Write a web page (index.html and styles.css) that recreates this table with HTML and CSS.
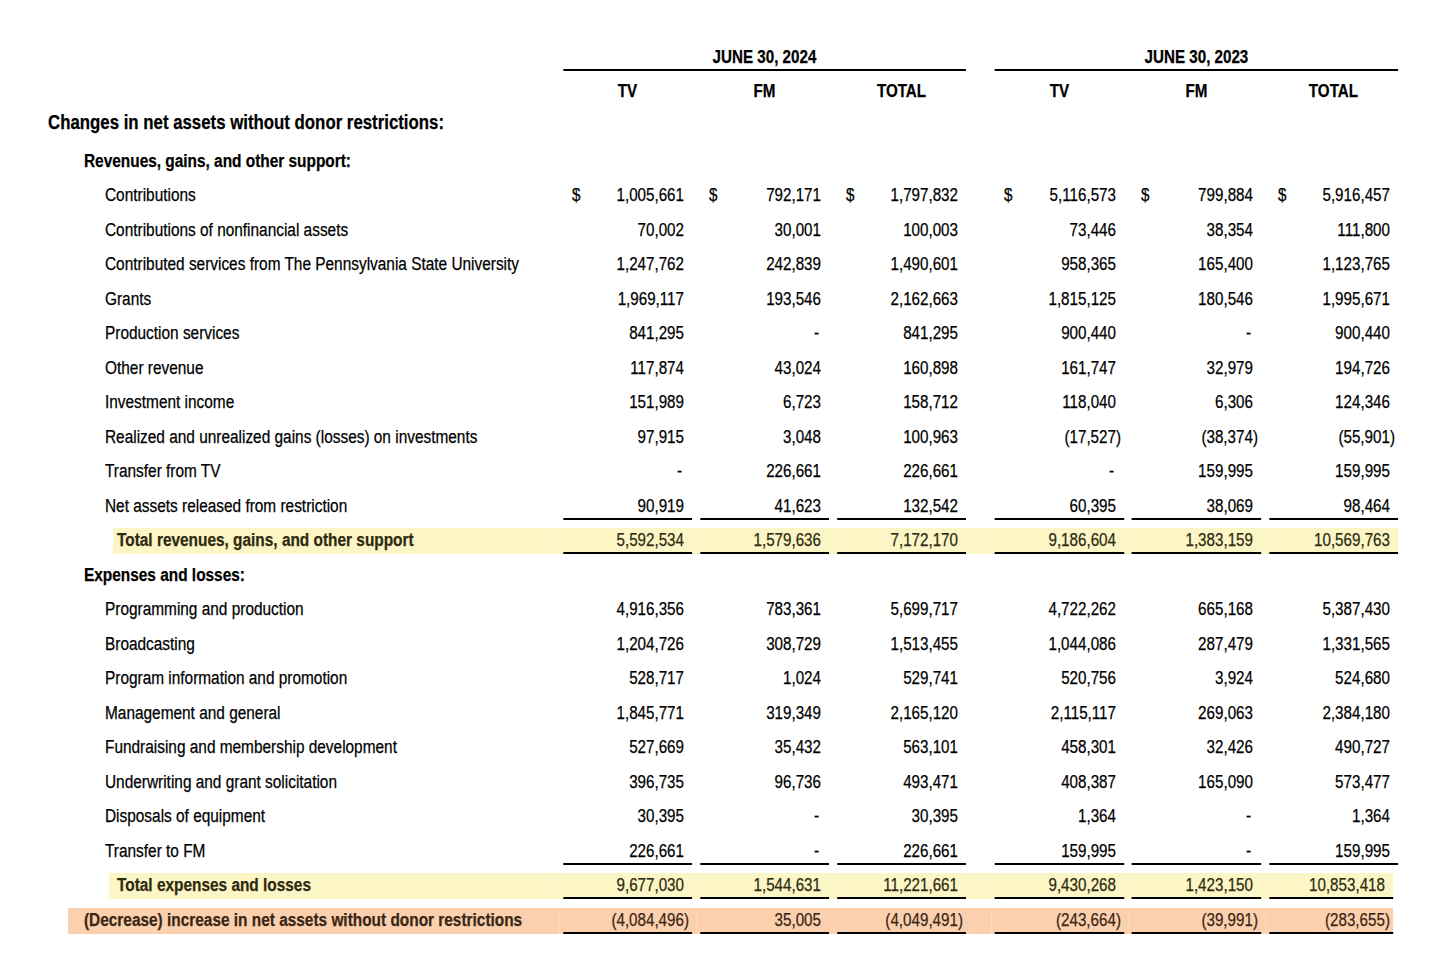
FILE: index.html
```html
<!DOCTYPE html>
<html lang="en">
<head>
<meta charset="utf-8">
<title>Statement of Activities</title>
<link rel="stylesheet" href="styles.css">
</head>
<body>
<div class="sheet">
 <div class="narrow">
  <div class="row r-date">
    <div></div>
    <div class="grp"><div class="gh">JUNE 30, 2024</div></div>
    <div></div>
    <div class="grp last"><div class="gh">JUNE 30, 2023</div></div>
  </div>
  <div class="row r-col">
    <div></div>
    <div class="ch">TV</div><div class="ch">FM</div><div class="ch">TOTAL</div>
    <div></div>
    <div class="ch">TV</div><div class="ch">FM</div><div class="ch last">TOTAL</div>
  </div>
  <div class="row r-h1"><div class="lab l1">Changes in net assets without donor restrictions:</div></div>
  <div class="row r-h2"><div class="lab l2">Revenues, gains, and other support:</div></div>

  <div class="row d">
    <div class="lab l3">Contributions</div>
    <div class="cell"><div class="v"><span>$</span><span class="n">1,005,661</span></div></div>
    <div class="cell"><div class="v"><span>$</span><span class="n">792,171</span></div></div>
    <div class="cell"><div class="v"><span>$</span><span class="n">1,797,832</span></div></div>
    <div></div>
    <div class="cell"><div class="v"><span>$</span><span class="n">5,116,573</span></div></div>
    <div class="cell"><div class="v"><span>$</span><span class="n">799,884</span></div></div>
    <div class="cell"><div class="v"><span>$</span><span class="n">5,916,457</span></div></div>
  </div>
  <div class="row d">
    <div class="lab l3">Contributions of nonfinancial assets</div>
    <div class="cell"><div class="v"><span class="n">70,002</span></div></div>
    <div class="cell"><div class="v"><span class="n">30,001</span></div></div>
    <div class="cell"><div class="v"><span class="n">100,003</span></div></div>
    <div></div>
    <div class="cell"><div class="v"><span class="n">73,446</span></div></div>
    <div class="cell"><div class="v"><span class="n">38,354</span></div></div>
    <div class="cell"><div class="v"><span class="n">111,800</span></div></div>
  </div>
  <div class="row d">
    <div class="lab l3">Contributed services from The Pennsylvania State University</div>
    <div class="cell"><div class="v"><span class="n">1,247,762</span></div></div>
    <div class="cell"><div class="v"><span class="n">242,839</span></div></div>
    <div class="cell"><div class="v"><span class="n">1,490,601</span></div></div>
    <div></div>
    <div class="cell"><div class="v"><span class="n">958,365</span></div></div>
    <div class="cell"><div class="v"><span class="n">165,400</span></div></div>
    <div class="cell"><div class="v"><span class="n">1,123,765</span></div></div>
  </div>
  <div class="row d">
    <div class="lab l3">Grants</div>
    <div class="cell"><div class="v"><span class="n">1,969,117</span></div></div>
    <div class="cell"><div class="v"><span class="n">193,546</span></div></div>
    <div class="cell"><div class="v"><span class="n">2,162,663</span></div></div>
    <div></div>
    <div class="cell"><div class="v"><span class="n">1,815,125</span></div></div>
    <div class="cell"><div class="v"><span class="n">180,546</span></div></div>
    <div class="cell"><div class="v"><span class="n">1,995,671</span></div></div>
  </div>
  <div class="row d">
    <div class="lab l3">Production services</div>
    <div class="cell"><div class="v"><span class="n">841,295</span></div></div>
    <div class="cell"><div class="v"><span class="n dash">-</span></div></div>
    <div class="cell"><div class="v"><span class="n">841,295</span></div></div>
    <div></div>
    <div class="cell"><div class="v"><span class="n">900,440</span></div></div>
    <div class="cell"><div class="v"><span class="n dash">-</span></div></div>
    <div class="cell"><div class="v"><span class="n">900,440</span></div></div>
  </div>
  <div class="row d">
    <div class="lab l3">Other revenue</div>
    <div class="cell"><div class="v"><span class="n">117,874</span></div></div>
    <div class="cell"><div class="v"><span class="n">43,024</span></div></div>
    <div class="cell"><div class="v"><span class="n">160,898</span></div></div>
    <div></div>
    <div class="cell"><div class="v"><span class="n">161,747</span></div></div>
    <div class="cell"><div class="v"><span class="n">32,979</span></div></div>
    <div class="cell"><div class="v"><span class="n">194,726</span></div></div>
  </div>
  <div class="row d">
    <div class="lab l3">Investment income</div>
    <div class="cell"><div class="v"><span class="n">151,989</span></div></div>
    <div class="cell"><div class="v"><span class="n">6,723</span></div></div>
    <div class="cell"><div class="v"><span class="n">158,712</span></div></div>
    <div></div>
    <div class="cell"><div class="v"><span class="n">118,040</span></div></div>
    <div class="cell"><div class="v"><span class="n">6,306</span></div></div>
    <div class="cell"><div class="v"><span class="n">124,346</span></div></div>
  </div>
  <div class="row d">
    <div class="lab l3">Realized and unrealized gains (losses) on investments</div>
    <div class="cell"><div class="v"><span class="n">97,915</span></div></div>
    <div class="cell"><div class="v"><span class="n">3,048</span></div></div>
    <div class="cell"><div class="v"><span class="n">100,963</span></div></div>
    <div></div>
    <div class="cell"><div class="v"><span class="n">(17,527<span class="p">)</span></span></div></div>
    <div class="cell"><div class="v"><span class="n">(38,374<span class="p">)</span></span></div></div>
    <div class="cell"><div class="v"><span class="n">(55,901<span class="p">)</span></span></div></div>
  </div>
  <div class="row d">
    <div class="lab l3">Transfer from TV</div>
    <div class="cell"><div class="v"><span class="n dash">-</span></div></div>
    <div class="cell"><div class="v"><span class="n">226,661</span></div></div>
    <div class="cell"><div class="v"><span class="n">226,661</span></div></div>
    <div></div>
    <div class="cell"><div class="v"><span class="n dash">-</span></div></div>
    <div class="cell"><div class="v"><span class="n">159,995</span></div></div>
    <div class="cell"><div class="v"><span class="n">159,995</span></div></div>
  </div>
  <div class="row d u">
    <div class="lab l3">Net assets released from restriction</div>
    <div class="cell"><div class="v"><span class="n">90,919</span></div></div>
    <div class="cell"><div class="v"><span class="n">41,623</span></div></div>
    <div class="cell"><div class="v"><span class="n">132,542</span></div></div>
    <div></div>
    <div class="cell"><div class="v"><span class="n">60,395</span></div></div>
    <div class="cell"><div class="v"><span class="n">38,069</span></div></div>
    <div class="cell"><div class="v"><span class="n">98,464</span></div></div>
  </div>
  <div class="row d u hl-y">
    <div class="lab lt1">Total revenues, gains, and other support</div>
    <div class="cell"><div class="v"><span class="n">5,592,534</span></div></div>
    <div class="cell"><div class="v"><span class="n">1,579,636</span></div></div>
    <div class="cell"><div class="v"><span class="n">7,172,170</span></div></div>
    <div class="gap"></div>
    <div class="cell"><div class="v"><span class="n">9,186,604</span></div></div>
    <div class="cell"><div class="v"><span class="n">1,383,159</span></div></div>
    <div class="cell"><div class="v"><span class="n">10,569,763</span></div></div>
  </div>

  <div class="row d">
    <div class="lab l2">Expenses and losses:</div>
  </div>
  <div class="row d">
    <div class="lab l3">Programming and production</div>
    <div class="cell"><div class="v"><span class="n">4,916,356</span></div></div>
    <div class="cell"><div class="v"><span class="n">783,361</span></div></div>
    <div class="cell"><div class="v"><span class="n">5,699,717</span></div></div>
    <div></div>
    <div class="cell"><div class="v"><span class="n">4,722,262</span></div></div>
    <div class="cell"><div class="v"><span class="n">665,168</span></div></div>
    <div class="cell"><div class="v"><span class="n">5,387,430</span></div></div>
  </div>
  <div class="row d">
    <div class="lab l3">Broadcasting</div>
    <div class="cell"><div class="v"><span class="n">1,204,726</span></div></div>
    <div class="cell"><div class="v"><span class="n">308,729</span></div></div>
    <div class="cell"><div class="v"><span class="n">1,513,455</span></div></div>
    <div></div>
    <div class="cell"><div class="v"><span class="n">1,044,086</span></div></div>
    <div class="cell"><div class="v"><span class="n">287,479</span></div></div>
    <div class="cell"><div class="v"><span class="n">1,331,565</span></div></div>
  </div>
  <div class="row d">
    <div class="lab l3">Program information and promotion</div>
    <div class="cell"><div class="v"><span class="n">528,717</span></div></div>
    <div class="cell"><div class="v"><span class="n">1,024</span></div></div>
    <div class="cell"><div class="v"><span class="n">529,741</span></div></div>
    <div></div>
    <div class="cell"><div class="v"><span class="n">520,756</span></div></div>
    <div class="cell"><div class="v"><span class="n">3,924</span></div></div>
    <div class="cell"><div class="v"><span class="n">524,680</span></div></div>
  </div>
  <div class="row d">
    <div class="lab l3">Management and general</div>
    <div class="cell"><div class="v"><span class="n">1,845,771</span></div></div>
    <div class="cell"><div class="v"><span class="n">319,349</span></div></div>
    <div class="cell"><div class="v"><span class="n">2,165,120</span></div></div>
    <div></div>
    <div class="cell"><div class="v"><span class="n">2,115,117</span></div></div>
    <div class="cell"><div class="v"><span class="n">269,063</span></div></div>
    <div class="cell"><div class="v"><span class="n">2,384,180</span></div></div>
  </div>
  <div class="row d">
    <div class="lab l3">Fundraising and membership development</div>
    <div class="cell"><div class="v"><span class="n">527,669</span></div></div>
    <div class="cell"><div class="v"><span class="n">35,432</span></div></div>
    <div class="cell"><div class="v"><span class="n">563,101</span></div></div>
    <div></div>
    <div class="cell"><div class="v"><span class="n">458,301</span></div></div>
    <div class="cell"><div class="v"><span class="n">32,426</span></div></div>
    <div class="cell"><div class="v"><span class="n">490,727</span></div></div>
  </div>
  <div class="row d">
    <div class="lab l3">Underwriting and grant solicitation</div>
    <div class="cell"><div class="v"><span class="n">396,735</span></div></div>
    <div class="cell"><div class="v"><span class="n">96,736</span></div></div>
    <div class="cell"><div class="v"><span class="n">493,471</span></div></div>
    <div></div>
    <div class="cell"><div class="v"><span class="n">408,387</span></div></div>
    <div class="cell"><div class="v"><span class="n">165,090</span></div></div>
    <div class="cell"><div class="v"><span class="n">573,477</span></div></div>
  </div>
  <div class="row d">
    <div class="lab l3">Disposals of equipment</div>
    <div class="cell"><div class="v"><span class="n">30,395</span></div></div>
    <div class="cell"><div class="v"><span class="n dash">-</span></div></div>
    <div class="cell"><div class="v"><span class="n">30,395</span></div></div>
    <div></div>
    <div class="cell"><div class="v"><span class="n">1,364</span></div></div>
    <div class="cell"><div class="v"><span class="n dash">-</span></div></div>
    <div class="cell"><div class="v"><span class="n">1,364</span></div></div>
  </div>
  <div class="row d u">
    <div class="lab l3">Transfer to FM</div>
    <div class="cell"><div class="v"><span class="n">226,661</span></div></div>
    <div class="cell"><div class="v"><span class="n dash">-</span></div></div>
    <div class="cell"><div class="v"><span class="n">226,661</span></div></div>
    <div></div>
    <div class="cell"><div class="v"><span class="n">159,995</span></div></div>
    <div class="cell"><div class="v"><span class="n dash">-</span></div></div>
    <div class="cell"><div class="v"><span class="n">159,995</span></div></div>
  </div>
  <div class="row d u hl-y short">
    <div class="lab lt2">Total expenses and losses</div>
    <div class="cell"><div class="v"><span class="n">9,677,030</span></div></div>
    <div class="cell"><div class="v"><span class="n">1,544,631</span></div></div>
    <div class="cell"><div class="v"><span class="n">11,221,661</span></div></div>
    <div class="gap"></div>
    <div class="cell"><div class="v"><span class="n">9,430,268</span></div></div>
    <div class="cell"><div class="v"><span class="n">1,423,150</span></div></div>
    <div class="cell"><div class="v"><span class="n">10,853,418</span></div></div>
  </div>
  <div class="row d u hl-o short">
    <div class="lab lt3">(Decrease) increase in net assets without donor restrictions</div>
    <div class="cell"><div class="v"><span class="n">(4,084,496<span class="p">)</span></span></div></div>
    <div class="cell"><div class="v"><span class="n">35,005</span></div></div>
    <div class="cell"><div class="v"><span class="n">(4,049,491<span class="p">)</span></span></div></div>
    <div class="gap"></div>
    <div class="cell"><div class="v"><span class="n">(243,664<span class="p">)</span></span></div></div>
    <div class="cell"><div class="v"><span class="n">(39,991<span class="p">)</span></span></div></div>
    <div class="cell"><div class="v"><span class="n">(283,655<span class="p">)</span></span></div></div>
  </div>
 </div>
</div>
</body>
</html>
```

FILE: styles.css
```css
html, body {
  margin: 0;
  padding: 0;
  background: #ffffff;
}

body {
  font-family: "Liberation Sans", Arial, sans-serif;
  font-size: 18.5px;
  color: #000000;
  --k: 0.82;
}

.sheet {
  padding: 45px 0 0 41px;
}

/* The statement is set in a narrow face: the whole block is laid out
   at full width and condensed horizontally (Arial Narrow = Arial x 0.82). */
.narrow {
  width: calc(1357px / var(--k));
  transform: scaleX(var(--k));
  transform-origin: 0 0;
  -webkit-text-stroke: 0.25px currentColor;
}

.row {
  display: grid;
  grid-template-columns:
    calc(518px / var(--k))
    calc(137px / var(--k))
    calc(137px / var(--k))
    calc(137px / var(--k))
    calc(21px / var(--k))
    calc(137px / var(--k))
    calc(137px / var(--k))
    calc(133px / var(--k));
}

/* header: date groups */
.grp {
  grid-column: span 3;
  padding: 0 calc(4px / var(--k));
}
.grp.last {
  padding: 0 0 0 calc(4px / var(--k));
}
.gh {
  height: 24px;
  line-height: 24px;
  text-align: center;
  font-weight: bold;
  border-bottom: 2px solid #000;
}

/* header: column names */
.r-col {
  padding-top: 8px;
}
.ch {
  height: 24px;
  line-height: 24px;
  text-align: center;
  font-weight: bold;
  padding: 0 calc(4px / var(--k));
}
.ch.last {
  padding: 0 0 0 calc(4px / var(--k));
}

.r-h1 {
  padding-top: 7px;
}
.r-h1 .lab {
  grid-column: 1 / -1;
}
.r-h2 {
  padding-top: 15px;
  padding-bottom: 5px;
}
.r-h2 .lab {
  grid-column: 1 / -1;
}

.lab {
  height: 24px;
  line-height: 24px;
  white-space: nowrap;
  font-size: 18.8px;
}
.l1 {
  padding-left: calc(7px / var(--k));
  font-weight: bold;
  font-size: 20.5px;
}
.l2 {
  padding-left: calc(43px / var(--k));
  font-weight: bold;
}
.l3 {
  padding-left: calc(64px / var(--k));
}

/* data rows */
.d {
  padding: 5px 0 3.5px;
}
.d .lab {
  height: 26px;
  line-height: 24px;
}
.cell {
  padding: 0 calc(4px / var(--k));
}
.cell:last-child {
  padding: 0 0 0 calc(4px / var(--k));
}
.v {
  display: flex;
  height: 24px;
  line-height: 24px;
  padding: 0 calc(8px / var(--k)) 0 calc(9px / var(--k));
  border-bottom: 2px solid transparent;
  white-space: nowrap;
}
.n {
  margin-left: auto;
}
.n.dash {
  margin-right: calc(2px / var(--k));
}
.p {
  margin-right: calc(-5px / var(--k));
}
.u .v {
  border-bottom-color: #000;
}

/* highlighted totals */
.lt1 {
  margin-left: calc(72px / var(--k));
  padding-left: calc(4px / var(--k));
  font-weight: bold;
}
.lt2 {
  margin-left: calc(68px / var(--k));
  padding-left: calc(8px / var(--k));
  font-weight: bold;
}
.lt3 {
  margin-left: calc(27px / var(--k));
  padding-left: calc(16px / var(--k));
  font-weight: bold;
}

.hl-y {
  color: #2e2a10;
}
.hl-y .lab,
.hl-y .cell,
.hl-y .gap {
  background: #fcf5c6;
}
.hl-o {
  color: #3a2614;
}
.hl-o .lab,
.hl-o .cell,
.hl-o .gap {
  background: #fbd0ae;
}
.short .cell:last-child {
  margin-right: calc(5px / var(--k));
}
```
